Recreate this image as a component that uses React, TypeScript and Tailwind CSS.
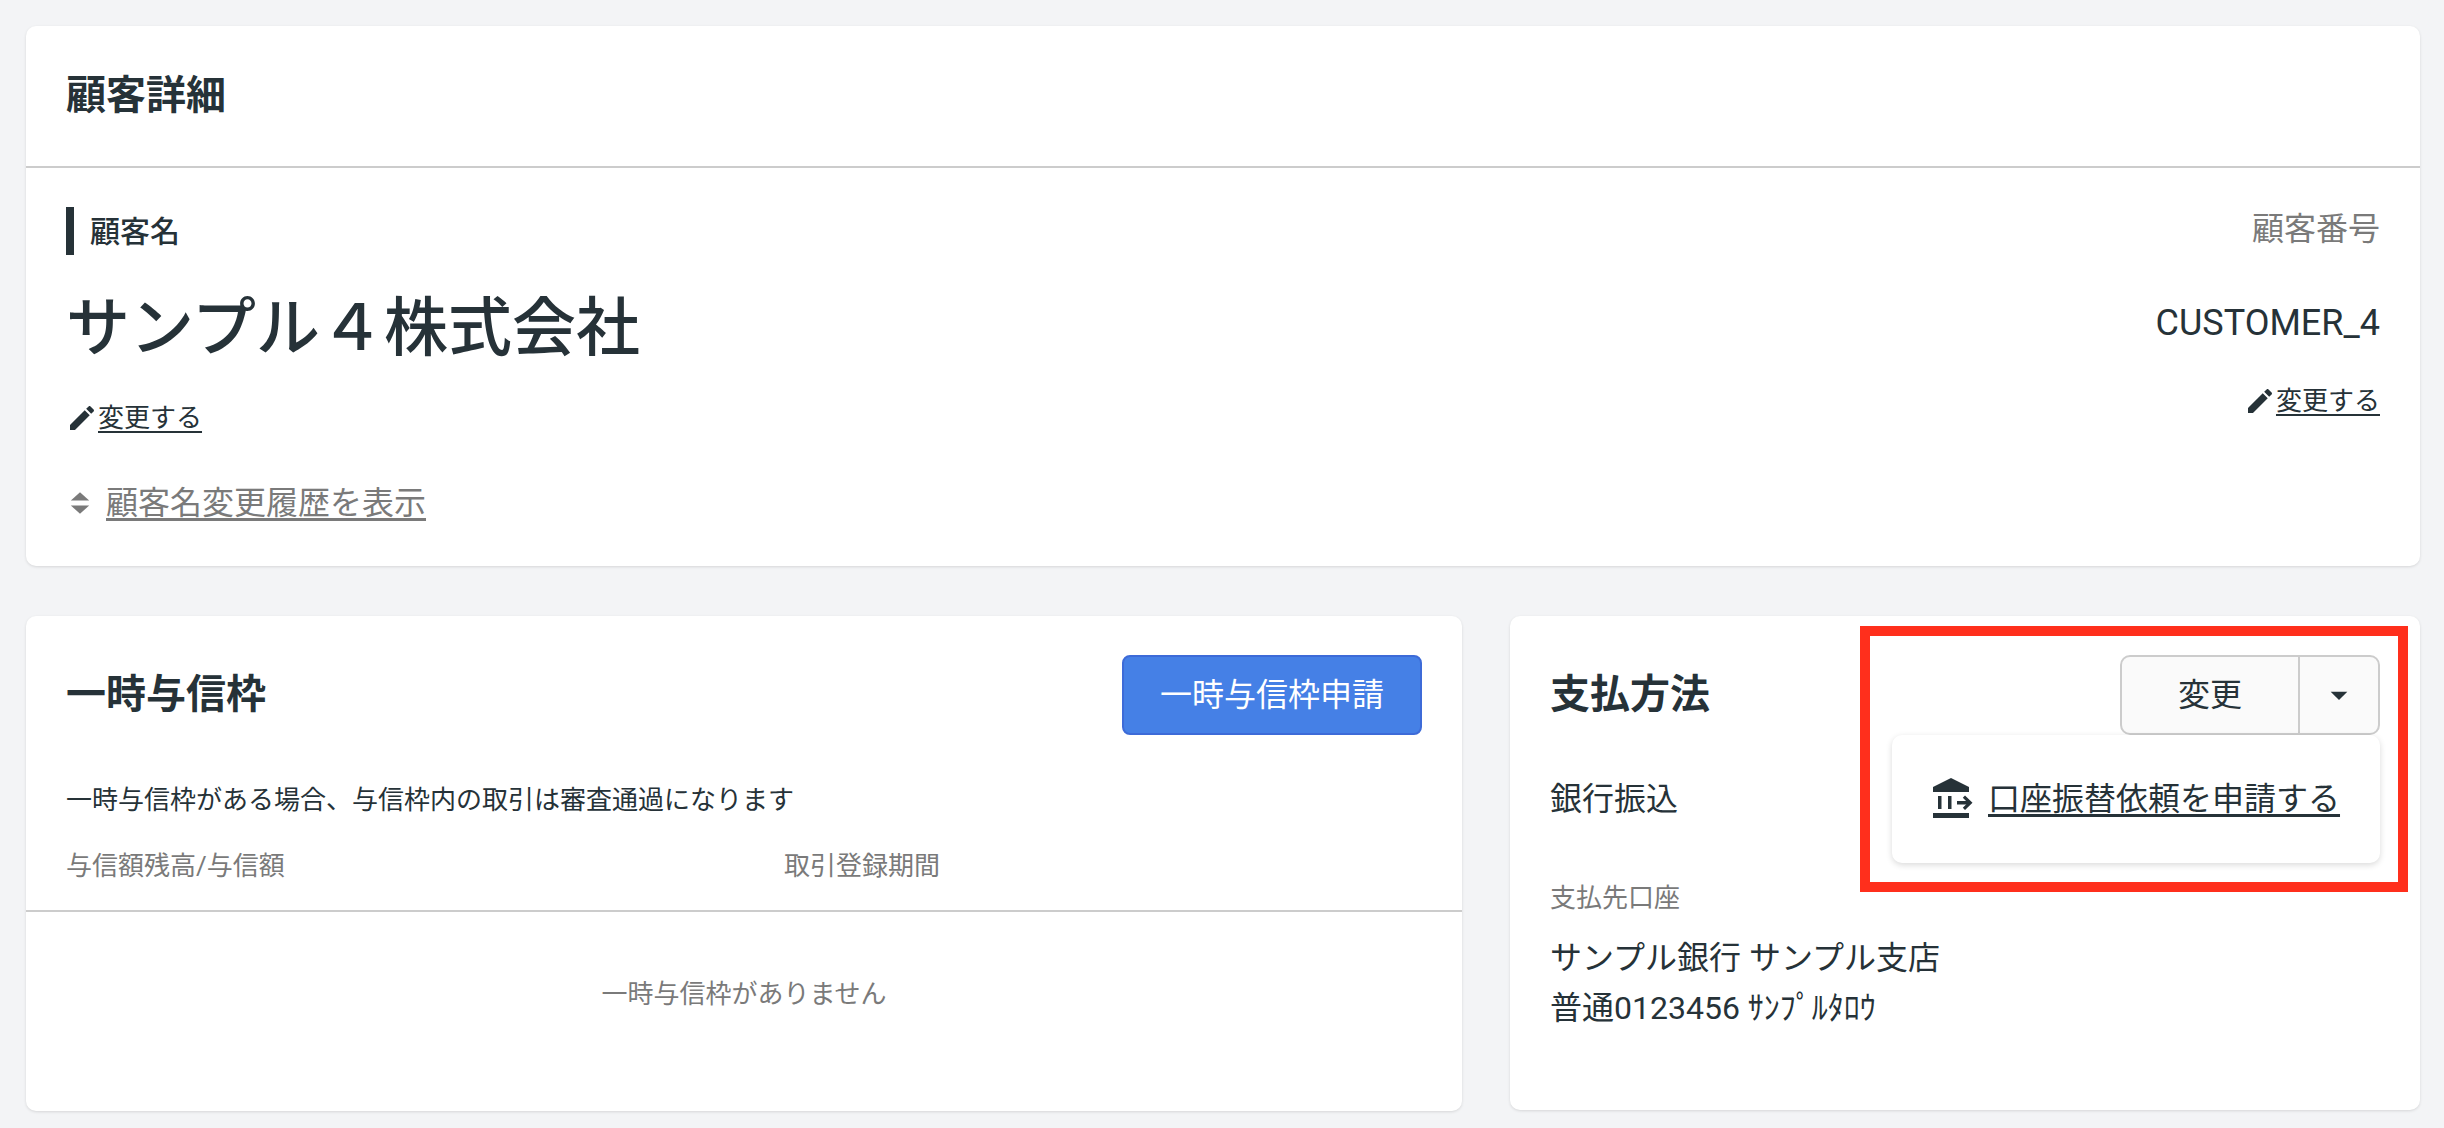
import React from 'react';

const FONT = "font-['Roboto','Noto_Sans_CJK_JP',sans-serif]";

function PencilIcon() {
  return (
    <svg viewBox="0 0 24 24" className="w-[32px] h-[32px] -ml-[2px] shrink-0 fill-[#263238]">
      <path d="M3 17.25V21h3.75L17.81 9.94l-3.75-3.75L3 17.25zM20.71 7.04c.39-.39.39-1.02 0-1.41l-2.34-2.34c-.39-.39-1.02-.39-1.41 0l-1.83 1.83 3.75 3.75 1.83-1.83z" />
    </svg>
  );
}

function EditLink() {
  return (
    <a className="inline-flex items-center text-[26px] leading-[36px] text-[#263238] underline underline-offset-[4px]">
      <PencilIcon />
      <span>変更する</span>
    </a>
  );
}

function BankTransferIcon() {
  return (
    <svg viewBox="0 0 40 40" className="w-[40px] h-[40px] ml-[1px] -mt-[2px] shrink-0 fill-[#263238]">
      <path d="M18 0 L36 9 V14 H0 V9 Z" />
      <rect x="5" y="18" width="3.5" height="13" />
      <rect x="15" y="18" width="3.5" height="13" />
      <rect x="24" y="23" width="11" height="3.5" />
      <path d="M32 17.5 L39.5 24.75 L32 32 L29.8 29.8 L34.8 24.75 L29.8 19.7 Z" />
      <rect x="0" y="35" width="36" height="6" />
    </svg>
  );
}

function CustomerCard() {
  return (
    <section className="bg-white rounded-[10px] shadow-[0_1px_3px_rgba(0,0,0,0.12)]">
      <div className="h-[142px] px-[40px] flex items-center border-b-2 border-[#cccccc]">
        <h1 className="text-[40px] font-bold text-[#263238]">顧客詳細</h1>
      </div>
      <div className="h-[398px] px-[40px] pt-[39px] flex justify-between">
        <div>
          <div className="h-[48px] border-l-[8px] border-[#263238] pl-[16px] flex items-center text-[30px] font-medium text-[#263238]">
            顧客名
          </div>
          <div className="mt-[29px] text-[64px] leading-[90px] font-medium text-[#263238]">サンプル４株式会社</div>
          <div className="mt-[26px] h-[36px] flex items-center pl-[2px]">
            <EditLink />
          </div>
          <div className="mt-[45px] flex items-center gap-[16px] pl-[4px] text-[32px] leading-[44px] text-[#7a7a7a]">
            <svg viewBox="0 0 24 32" className="w-[20px] h-[28px] fill-[#7a7a7a]">
              <path d="M12 3 L23 13 H1 Z" />
              <path d="M12 29 L1 19 H23 Z" />
            </svg>
            <span className="underline underline-offset-[4px]">顧客名変更履歴を表示</span>
          </div>
        </div>
        <div className="flex flex-col items-end">
          <div className="text-[32px] leading-[44px] text-[#7a7a7a]">顧客番号</div>
          <div className="mt-[50px] text-[36px] leading-[44px] text-[#263238]">CUSTOMER_4</div>
          <div className="mt-[38px]">
            <EditLink />
          </div>
        </div>
      </div>
    </section>
  );
}

function CreditCard() {
  return (
    <section className="w-[1436px] h-[495px] shrink-0 bg-white rounded-[10px] shadow-[0_1px_3px_rgba(0,0,0,0.12)]">
      <div className="px-[40px] pt-[39px] flex items-center justify-between">
        <h2 className="text-[40px] font-bold text-[#263238]">一時与信枠</h2>
        <button className="w-[300px] h-[80px] rounded-[8px] bg-[#4580e6] border-2 border-[#3d6bd8] text-white text-[32px]">
          一時与信枠申請
        </button>
      </div>
      <p className="mt-[47px] px-[40px] text-[26px] leading-[36px] text-[#263238]">
        一時与信枠がある場合、与信枠内の取引は審査通過になります
      </p>
      <div className="mt-[30px] px-[40px] pb-[26px] flex border-b-2 border-[#cccccc] text-[26px] leading-[36px] text-[#7a7a7a]">
        <div className="w-[718px]">与信額残高/与信額</div>
        <div>取引登録期間</div>
      </div>
      <div className="pt-[64px] text-center text-[26px] leading-[36px] text-[#7a7a7a]">一時与信枠がありません</div>
    </section>
  );
}

function PaymentCard() {
  return (
    <section className="relative flex-1 h-[494px] bg-white rounded-[10px] shadow-[0_1px_3px_rgba(0,0,0,0.12)] px-[40px] pt-[39px]">
      <div className="flex items-center justify-between">
        <h2 className="text-[40px] font-bold text-[#263238]">支払方法</h2>
        <div className="flex w-[260px] h-[80px] rounded-[10px] border-2 border-[#cccccc] bg-[#fafafa] text-[#263238]">
          <button className="w-[178px] border-r-2 border-[#cccccc] text-[32px]">変更</button>
          <button className="flex-1 flex items-center justify-center">
            <svg viewBox="0 0 24 24" className="w-[40px] h-[40px] fill-[#263238]">
              <path d="M7 10l5 5 5-5z" />
            </svg>
          </button>
        </div>
      </div>
      <div className="mt-[42px] text-[32px] leading-[44px] text-[#263238]">銀行振込</div>
      <div className="mt-[59px] text-[26px] leading-[36px] text-[#7a7a7a]">支払先口座</div>
      <div className="mt-[17px] text-[32px] leading-[50px] text-[#263238]">
        <div>サンプル銀行 サンプル支店</div>
        <div>普通0123456 ｻﾝﾌﾟﾙﾀﾛｳ</div>
      </div>

      {/* dropdown menu */}
      <div className="absolute left-[382px] top-[119px] w-[488px] h-[128px] bg-white rounded-[10px] shadow-[0_2px_6px_rgba(0,0,0,0.15)] flex items-center pl-[40px] gap-[15px] text-[32px] text-[#263238]">
        <BankTransferIcon />
        <span className="underline underline-offset-[4px]">口座振替依頼を申請する</span>
      </div>

      {/* red annotation frame */}
      <div className="absolute left-[350px] top-[10px] w-[548px] h-[266px] border-[10px] border-[#ff2f1c]" />
    </section>
  );
}

export default function App() {
  return (
    <div className={`${FONT} min-h-screen bg-[#f3f4f6] pl-[26px] pr-[24px] pt-[26px] flex flex-col gap-[50px]`}>
      <CustomerCard />
      <div className="flex gap-[48px]">
        <CreditCard />
        <PaymentCard />
      </div>
    </div>
  );
}
